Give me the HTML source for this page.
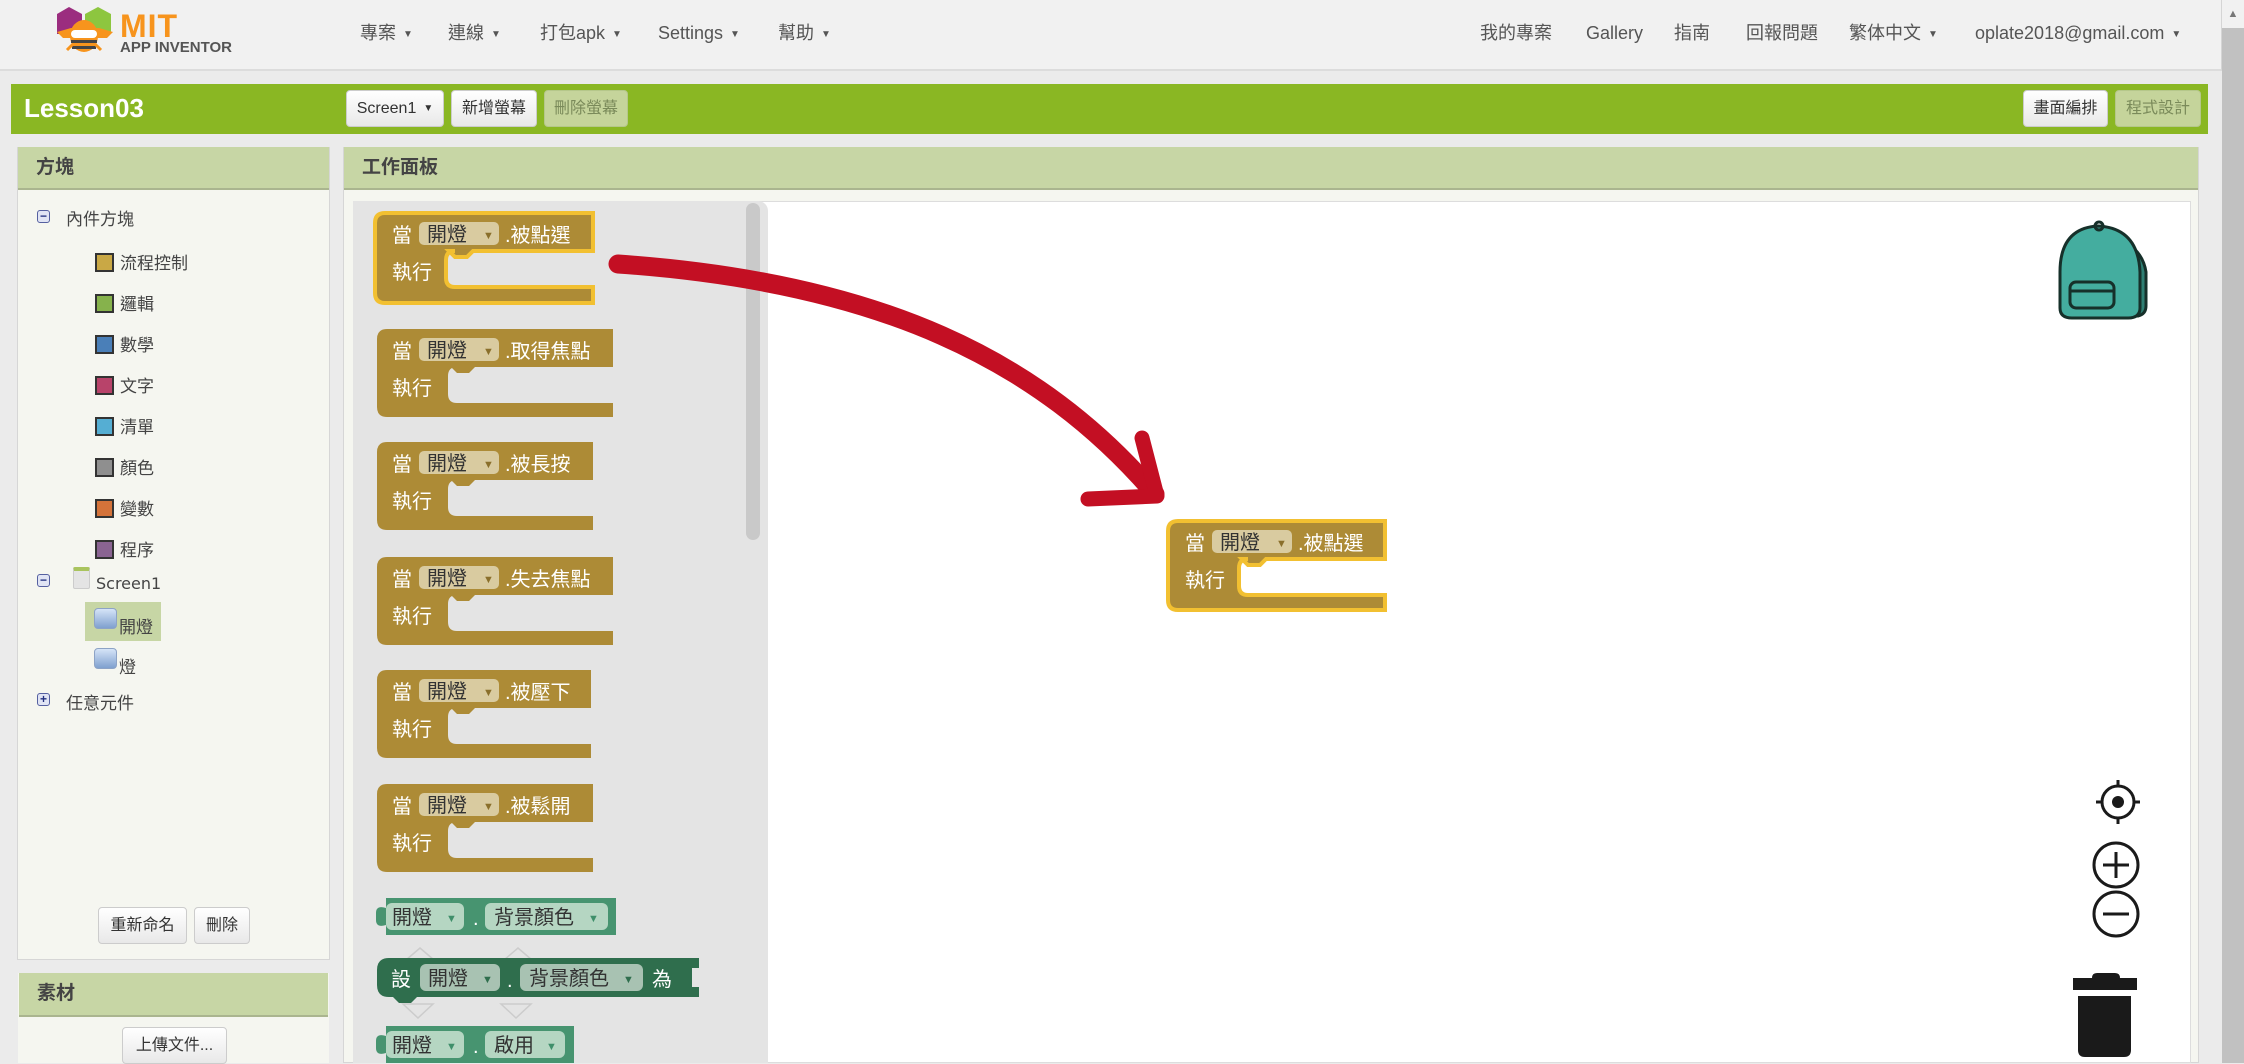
<!DOCTYPE html>
<html><head><meta charset="utf-8">
<style>
*{margin:0;padding:0;box-sizing:border-box}
body{width:2244px;height:1063px;overflow:hidden;background:#ebebeb;font-family:"Liberation Sans","Noto Sans CJK TC",sans-serif;position:relative}
.a{position:absolute}
.nav{left:0;top:0;width:2222px;height:71px;background:#f1f1f1;border-bottom:2px solid #dcdcdc;border-right:1px solid #d5d5d5}
.ni{position:absolute;top:21px;font-size:18px;line-height:24px;color:#555;white-space:nowrap}
.car{font-size:10px;margin-left:7px;vertical-align:2px}
.btn{position:absolute;background:linear-gradient(#fff,#e8e8e8);border:1px solid #ccc;border-radius:4px;font-size:16px;color:#333;text-align:center;line-height:35px;white-space:nowrap}
.dis{background:#c5d49b;border-color:#b5c78a;color:#7a8a5a}
.hdr{background:#c7d6a5;border-bottom:2px solid #aab58f;font-size:19px;font-weight:bold;color:#444;padding-left:18px;line-height:42px}
.ti{position:absolute;font-size:17px;color:#444;white-space:nowrap}
.sw{position:absolute;left:95px;width:19px;height:19px;border:2px solid #333}
.tg{position:absolute;left:37px;width:13px;height:13px;border:1px solid #5560a0;border-radius:3px;background:#e0e4f4;font-size:12px;line-height:10px;text-align:center;color:#223080;font-weight:bold}
.bi{position:absolute;left:94px;width:23px;height:21px;border-radius:4px;background:linear-gradient(#d6e4f7,#7fa0cf);border:1px solid #8da3c6}
</style></head><body>
<div class="a nav"></div>
<svg class="a" style="left:55px;top:4px" width="60" height="50" viewBox="0 0 60 50">
<polygon points="2,10 14,3 27,10 27,30 2,30" fill="#9b2d7f"/>
<polygon points="30,10 43,3 56,10 56,30 30,30" fill="#8dc63f"/>
<path d="M2,28 L16,24 H44 L58,28 L52,34 H8 Z" fill="#f7941d"/>
<ellipse cx="29" cy="32" rx="14" ry="16" fill="#f7941d"/>
<rect x="16" y="26" width="26" height="8" rx="4" fill="#fff"/>
<rect x="16" y="36" width="26" height="3" fill="#444"/><rect x="17" y="42" width="24" height="3" fill="#444"/>
<path d="M12,46 L18,40 M46,46 L40,40" stroke="#f7941d" stroke-width="3"/>
</svg>
<div class="a" style="left:120px;top:8px;font-size:32px;font-weight:bold;color:#f7941d;letter-spacing:1px">MIT</div>
<div class="a" style="left:120px;top:39px;font-size:15px;font-weight:bold;color:#555">APP INVENTOR</div>
<div class="ni" style="left:360px">專案<span class="car">▼</span></div>
<div class="ni" style="left:448px">連線<span class="car">▼</span></div>
<div class="ni" style="left:540px">打包apk<span class="car">▼</span></div>
<div class="ni" style="left:658px">Settings<span class="car">▼</span></div>
<div class="ni" style="left:778px">幫助<span class="car">▼</span></div>
<div class="ni" style="left:1480px">我的專案</div>
<div class="ni" style="left:1586px">Gallery</div>
<div class="ni" style="left:1674px">指南</div>
<div class="ni" style="left:1746px">回報問題</div>
<div class="ni" style="left:1849px">繁体中文<span class="car">▼</span></div>
<div class="ni" style="left:1975px">oplate2018@gmail.com<span class="car">▼</span></div>
<div class="a" style="left:2222px;top:0;width:22px;height:1063px;background:#c1c1c1"></div>
<div class="a" style="left:2222px;top:0;width:22px;height:28px;background:#f1f1f1;font-size:11px;color:#777;text-align:center;line-height:28px">▲</div>

<div class="a" style="left:11px;top:84px;width:2197px;height:50px;background:#8ab723"></div>
<div class="a" style="left:24px;top:93px;font-size:26px;font-weight:bold;color:#fff">Lesson03</div>
<div class="btn" style="left:346px;top:90px;width:98px;height:37px">Screen1<span class="car">▼</span></div>
<div class="btn" style="left:451px;top:90px;width:86px;height:37px">新增螢幕</div>
<div class="btn dis" style="left:544px;top:90px;width:84px;height:37px">刪除螢幕</div>
<div class="btn" style="left:2023px;top:90px;width:85px;height:37px">畫面編排</div>
<div class="btn dis" style="left:2115px;top:90px;width:86px;height:37px">程式設計</div>

<div class="a" style="left:17px;top:147px;width:313px;height:813px;background:#f5f6f0;border:1px solid #d6d6d6"></div>
<div class="a hdr" style="left:18px;top:147px;width:311px;height:43px">方塊</div>
<div class="tg" style="top:210px">−</div><div class="ti" style="left:66px;top:205px">內件方塊</div>
<div class="sw" style="top:253px;background:#c9a845"></div><div class="ti" style="left:120px;top:249px">流程控制</div>
<div class="sw" style="top:294px;background:#86b24c"></div><div class="ti" style="left:120px;top:290px">邏輯</div>
<div class="sw" style="top:335px;background:#4a7fb8"></div><div class="ti" style="left:120px;top:331px">數學</div>
<div class="sw" style="top:376px;background:#b8436a"></div><div class="ti" style="left:120px;top:372px">文字</div>
<div class="sw" style="top:417px;background:#55aed3"></div><div class="ti" style="left:120px;top:413px">清單</div>
<div class="sw" style="top:458px;background:#8f8f8f"></div><div class="ti" style="left:120px;top:454px">顏色</div>
<div class="sw" style="top:499px;background:#d4733a"></div><div class="ti" style="left:120px;top:495px">變數</div>
<div class="sw" style="top:540px;background:#8a6492"></div><div class="ti" style="left:120px;top:536px">程序</div>
<div class="tg" style="top:574px">−</div>
<div class="a" style="left:73px;top:567px;width:17px;height:22px;background:#e4e4e4;border:1px solid #ccc;border-top:4px solid #a9c45e;border-radius:2px"></div>
<div class="ti" style="left:96px;top:574px;font-family:'DejaVu Sans',sans-serif;font-size:16px">Screen1</div>
<div class="a" style="left:85px;top:602px;width:76px;height:39px;background:#c7d6a5"></div>
<div class="bi" style="top:608px"></div><div class="ti" style="left:119px;top:613px">開燈</div>
<div class="bi" style="top:648px"></div><div class="ti" style="left:119px;top:653px">燈</div>
<div class="tg" style="top:693px">+</div><div class="ti" style="left:66px;top:689px">任意元件</div>
<div class="btn" style="left:98px;top:907px;width:89px;height:37px">重新命名</div>
<div class="btn" style="left:194px;top:907px;width:56px;height:37px">刪除</div>
<div class="a" style="left:18px;top:973px;width:311px;height:90px;background:#f5f6f0"></div>
<div class="a hdr" style="left:19px;top:973px;width:309px;height:44px">素材</div>
<div class="btn" style="left:122px;top:1027px;width:105px;height:37px">上傳文件...</div>

<div class="a" style="left:343px;top:147px;width:1856px;height:916px;background:#f5f6f0;border:1px solid #d6d6d6"></div>
<div class="a hdr" style="left:344px;top:147px;width:1854px;height:43px">工作面板</div>
<div class="a" style="left:353px;top:201px;width:1838px;height:862px;background:#fff;border:1px solid #ddd"></div>
<div class="a" style="left:353px;top:201px;width:415px;height:862px;background:#e4e4e4;border-radius:0 10px 0 0"></div>
<div class="a" style="left:746px;top:203px;width:14px;height:337px;background:#c9c9c9;border-radius:7px"></div>

<svg class="a" style="left:0;top:0" width="2244" height="1063" font-family="Liberation Sans,Noto Sans CJK TC,sans-serif">
<g font-size="20">
<g transform="translate(375,213)"><path d="M10,0 H218 V38 H98 l-6,6 h-12 l-6,-6 H80 q-9,0 -9,9 V65 q0,9 9,9 H218 V90 H10 q-10,0 -10,-10 V10 q0,-10 10,-10 Z" fill="#ad8b36" stroke="#f2c031" stroke-width="4"/>
<text x="17" y="29" fill="#fff">當</text><rect x="44" y="9" width="80" height="23" rx="5" fill="#d9cba0"/><text x="52" y="28" fill="#333">開燈</text><text x="108" y="26" font-size="11" fill="#8a6f2b">▼</text><text x="130" y="29" fill="#fff">.被點選</text><text x="17" y="66" fill="#fff">執行</text></g>

<g transform="translate(377,329)"><path d="M10,0 H236 V38 H98 l-6,6 h-12 l-6,-6 H80 q-9,0 -9,9 V65 q0,9 9,9 H236 V88 H10 q-10,0 -10,-10 V10 q0,-10 10,-10 Z" fill="#ad8b36"/>
<text x="15" y="29" fill="#fff">當</text><rect x="42" y="9" width="80" height="23" rx="5" fill="#d9cba0"/><text x="50" y="28" fill="#333">開燈</text><text x="106" y="26" font-size="11" fill="#8a6f2b">▼</text><text x="128" y="29" fill="#fff">.取得焦點</text><text x="15" y="66" fill="#fff">執行</text></g>

<g transform="translate(377,442)"><path d="M10,0 H216 V38 H98 l-6,6 h-12 l-6,-6 H80 q-9,0 -9,9 V65 q0,9 9,9 H216 V88 H10 q-10,0 -10,-10 V10 q0,-10 10,-10 Z" fill="#ad8b36"/>
<text x="15" y="29" fill="#fff">當</text><rect x="42" y="9" width="80" height="23" rx="5" fill="#d9cba0"/><text x="50" y="28" fill="#333">開燈</text><text x="106" y="26" font-size="11" fill="#8a6f2b">▼</text><text x="128" y="29" fill="#fff">.被長按</text><text x="15" y="66" fill="#fff">執行</text></g>

<g transform="translate(377,557)"><path d="M10,0 H236 V38 H98 l-6,6 h-12 l-6,-6 H80 q-9,0 -9,9 V65 q0,9 9,9 H236 V88 H10 q-10,0 -10,-10 V10 q0,-10 10,-10 Z" fill="#ad8b36"/>
<text x="15" y="29" fill="#fff">當</text><rect x="42" y="9" width="80" height="23" rx="5" fill="#d9cba0"/><text x="50" y="28" fill="#333">開燈</text><text x="106" y="26" font-size="11" fill="#8a6f2b">▼</text><text x="128" y="29" fill="#fff">.失去焦點</text><text x="15" y="66" fill="#fff">執行</text></g>

<g transform="translate(377,670)"><path d="M10,0 H214 V38 H98 l-6,6 h-12 l-6,-6 H80 q-9,0 -9,9 V65 q0,9 9,9 H214 V88 H10 q-10,0 -10,-10 V10 q0,-10 10,-10 Z" fill="#ad8b36"/>
<text x="15" y="29" fill="#fff">當</text><rect x="42" y="9" width="80" height="23" rx="5" fill="#d9cba0"/><text x="50" y="28" fill="#333">開燈</text><text x="106" y="26" font-size="11" fill="#8a6f2b">▼</text><text x="128" y="29" fill="#fff">.被壓下</text><text x="15" y="66" fill="#fff">執行</text></g>

<g transform="translate(377,784)"><path d="M10,0 H216 V38 H98 l-6,6 h-12 l-6,-6 H80 q-9,0 -9,9 V65 q0,9 9,9 H216 V88 H10 q-10,0 -10,-10 V10 q0,-10 10,-10 Z" fill="#ad8b36"/>
<text x="15" y="29" fill="#fff">當</text><rect x="42" y="9" width="80" height="23" rx="5" fill="#d9cba0"/><text x="50" y="28" fill="#333">開燈</text><text x="106" y="26" font-size="11" fill="#8a6f2b">▼</text><text x="128" y="29" fill="#fff">.被鬆開</text><text x="15" y="66" fill="#fff">執行</text></g>

<g transform="translate(1168,521)"><path d="M10,0 H217 V38 H98 l-6,6 h-12 l-6,-6 H80 q-9,0 -9,9 V65 q0,9 9,9 H217 V89 H10 q-10,0 -10,-10 V10 q0,-10 10,-10 Z" fill="#ad8b36" stroke="#f2c031" stroke-width="4"/>
<text x="17" y="29" fill="#fff">當</text><rect x="44" y="9" width="80" height="23" rx="5" fill="#d9cba0"/><text x="52" y="28" fill="#333">開燈</text><text x="108" y="26" font-size="11" fill="#8a6f2b">▼</text><text x="130" y="29" fill="#fff">.被點選</text><text x="17" y="66" fill="#fff">執行</text></g>

<g transform="translate(376,898)"><path d="M10,0 H240 V37 H10 V27 q-10,3 -10,-5 V15 q0,-8 10,-5 Z" fill="#479470"/>
<rect x="10" y="5" width="78" height="27" rx="6" fill="#b5d6c2"/><text x="16" y="26" fill="#333">開燈</text><text x="70" y="24" font-size="11" fill="#3f8f6a">▼</text>
<text x="97" y="27" fill="#fff">.</text><rect x="109" y="5" width="123" height="27" rx="6" fill="#b5d6c2"/><text x="118" y="26" fill="#333">背景顏色</text><text x="212" y="24" font-size="11" fill="#3f8f6a">▼</text></g>

<g fill="none" stroke="#ccc" stroke-width="1.5"><path d="M406,960 l14,-12 l14,12"/><path d="M504,960 l14,-12 l14,12"/><path d="M403,1004 h30 l-15,14 Z"/><path d="M501,1004 h30 l-15,14 Z"/></g>
<g transform="translate(377,958)"><path d="M12,0 H322 V10 H315 V29 H322 V39 H40 l-6,6 h-12 l-6,-6 H12 q-12,0 -12,-12 V12 q0,-12 12,-12 Z" fill="#2f6e4d"/>
<text x="14" y="28" fill="#fff">設</text><rect x="43" y="6" width="80" height="27" rx="6" fill="#a8c2b2"/><text x="51" y="27" fill="#333">開燈</text><text x="105" y="25" font-size="11" fill="#2f6e4d">▼</text>
<text x="130" y="29" fill="#fff">.</text><rect x="143" y="6" width="123" height="27" rx="6" fill="#a8c2b2"/><text x="152" y="27" fill="#333">背景顏色</text><text x="246" y="25" font-size="11" fill="#2f6e4d">▼</text><text x="275" y="28" fill="#fff">為</text></g>

<g transform="translate(376,1026)"><path d="M10,0 H198 V37 H10 V27 q-10,3 -10,-5 V15 q0,-8 10,-5 Z" fill="#479470"/>
<rect x="10" y="5" width="78" height="27" rx="6" fill="#b5d6c2"/><text x="16" y="26" fill="#333">開燈</text><text x="70" y="24" font-size="11" fill="#3f8f6a">▼</text>
<text x="97" y="27" fill="#fff">.</text><rect x="109" y="5" width="80" height="27" rx="6" fill="#b5d6c2"/><text x="118" y="26" fill="#333">啟用</text><text x="170" y="24" font-size="11" fill="#3f8f6a">▼</text></g>
</g>

<path d="M618,264 C880,282 1040,360 1155,494" fill="none" stroke="#c30f23" stroke-width="19" stroke-linecap="round"/>
<path d="M1142,438 L1157,496 L1088,499" fill="none" stroke="#c30f23" stroke-width="15" stroke-linecap="round" stroke-linejoin="round"/>

<g stroke="#16302a" stroke-width="3">
<path d="M2112,236 q30,10 34,36 v34 q0,8 -8,10 h-10 z" fill="#2e7f73"/>
<path d="M2060,272 q0,-44 38,-46 q40,2 42,46 v36 q0,10 -12,10 h-56 q-12,0 -12,-10 z" fill="#44ad9f"/>
<rect x="2070" y="282" width="44" height="26" rx="6" fill="#44ad9f"/><path d="M2070,291 h44" fill="none"/>
<circle cx="2099" cy="226" r="4" fill="none"/>
</g>
<g stroke="#1a1a1a" stroke-width="3" fill="none">
<circle cx="2118" cy="802" r="16"/><path d="M2118,780 v6 M2118,818 v6 M2096,802 h6 M2134,802 h6"/>
<circle cx="2116" cy="865" r="22"/><path d="M2103,865 h26 M2116,852 v26"/>
<circle cx="2116" cy="914" r="22"/><path d="M2103,914 h26"/>
</g>
<circle cx="2118" cy="802" r="6" fill="#1a1a1a"/>
<path d="M2092,978 q0,-5 5,-5 h18 q5,0 5,5 h17 v12 h-64 v-12 z" fill="#1a1a1a"/>
<path d="M2078,996 h53 v54 q0,7 -7,7 h-39 q-7,0 -7,-7 z" fill="#1a1a1a"/>
</svg>
</body></html>
